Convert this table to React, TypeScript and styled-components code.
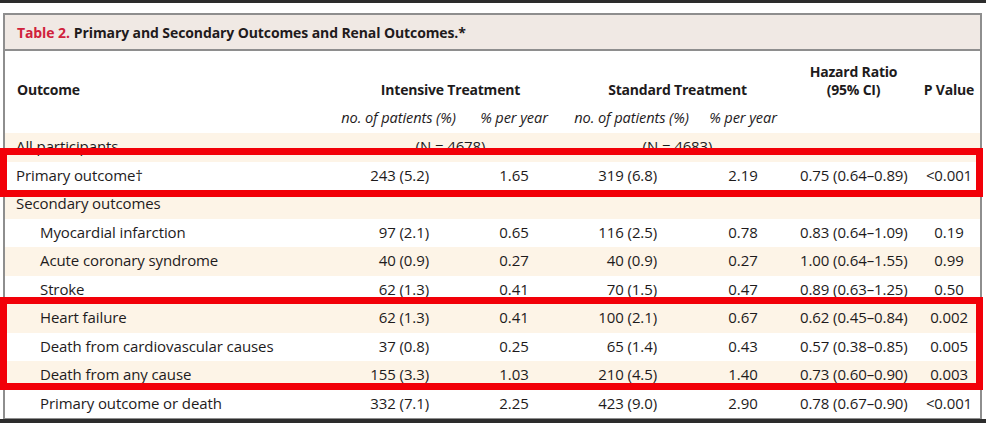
import React from "react";
import styled, { createGlobalStyle } from "styled-components";

const GlobalStyle = createGlobalStyle`
  html, body {
    margin: 0;
    padding: 0;
    background: #ffffff;
    overflow: hidden;
  }
  body {
    font-family: "Open Sans", Lato, "Liberation Sans", sans-serif;
    color: #1e1b1c;
  }
`;

const COLS = "330px 127px 104px 131px 92px 129px 62px";

const Page = styled.div`
  position: relative;
  width: 986px;
  height: 423px;
  overflow: hidden;
`;

const TopBar = styled.div`
  height: 3px;
  background: #2c2c2c;
`;

const BottomBar = styled.div`
  height: 4px;
  background: #2c2c2c;
`;

const Frame = styled.div`
  margin: 10px 0 0 3px;
  width: 975px;
  border: 2px solid #8e8e8e;
  border-bottom-width: 1px;
  background: #fff;
`;

const TitleBar = styled.div`
  height: 34px;
  display: flex;
  align-items: center;
  padding-left: 12px;
  background: #f0e9e4;
  border-bottom: 2px solid #8e8e8e;
  font-size: 14px;
  font-weight: 700;
  letter-spacing: -0.1px;
  color: #1f1b1c;
`;

const TableNo = styled.span`
  color: #d0223c;
  margin-right: 4px;
`;

const HeadRow = styled.div`
  display: grid;
  grid-template-columns: ${COLS};
  align-items: end;
  padding: 12px 0 4px;
  font-weight: 700;
  font-size: 14px;
  line-height: 17.5px;
  letter-spacing: -0.2px;
`;

const SubRow = styled.div`
  display: grid;
  grid-template-columns: ${COLS};
  align-items: center;
  height: 31px;
  padding-bottom: 2px;
  box-sizing: border-box;
  font-style: italic;
  font-size: 14.6px;
  letter-spacing: -0.1px;
`;

const HeadCell = styled.div<{ $span?: number; $left?: boolean }>`
  grid-column: span ${(p) => p.$span ?? 1};
  text-align: ${(p) => (p.$left ? "left" : "center")};
  padding-left: ${(p) => (p.$left ? "12px" : "0")};
  white-space: nowrap;
`;

const Row = styled.div<{ $shade?: boolean }>`
  display: grid;
  grid-template-columns: ${COLS};
  align-items: center;
  height: 28.5px;
  padding-bottom: 2px;
  box-sizing: border-box;
  background: ${(p) => (p.$shade ? "#fdf4e7" : "#ffffff")};
  font-size: 15px;
  letter-spacing: -0.1px;
  white-space: nowrap;
`;

const Label = styled.div<{ $indent?: boolean }>`
  padding-left: ${(p) => (p.$indent ? "35px" : "11px")};
`;

const Count = styled.div<{ $pad: number }>`
  text-align: right;
  padding-right: ${(p) => p.$pad}px;
`;

const Center = styled.div<{ $span?: number }>`
  grid-column: span ${(p) => p.$span ?? 1};
  text-align: center;
`;

const Ratio = styled.div`
  padding-left: 11px;
`;

const Highlight = styled.div<{ $top: number; $height: number }>`
  position: absolute;
  left: 0;
  top: ${(p) => p.$top}px;
  width: 983px;
  height: ${(p) => p.$height}px;
  box-sizing: border-box;
  border: 7px solid #f20008;
  pointer-events: none;
`;

type Outcome = {
  name: string;
  indent?: boolean;
  vals?: [string, string, string, string, string, string];
};

const rows: Outcome[] = [
  { name: "Primary outcome†", vals: ["243 (5.2)", "1.65", "319 (6.8)", "2.19", "0.75 (0.64–0.89)", "<0.001"] },
  { name: "Secondary outcomes" },
  { name: "Myocardial infarction", indent: true, vals: ["97 (2.1)", "0.65", "116 (2.5)", "0.78", "0.83 (0.64–1.09)", "0.19"] },
  { name: "Acute coronary syndrome", indent: true, vals: ["40 (0.9)", "0.27", "40 (0.9)", "0.27", "1.00 (0.64–1.55)", "0.99"] },
  { name: "Stroke", indent: true, vals: ["62 (1.3)", "0.41", "70 (1.5)", "0.47", "0.89 (0.63–1.25)", "0.50"] },
  { name: "Heart failure", indent: true, vals: ["62 (1.3)", "0.41", "100 (2.1)", "0.67", "0.62 (0.45–0.84)", "0.002"] },
  { name: "Death from cardiovascular causes", indent: true, vals: ["37 (0.8)", "0.25", "65 (1.4)", "0.43", "0.57 (0.38–0.85)", "0.005"] },
  { name: "Death from any cause", indent: true, vals: ["155 (3.3)", "1.03", "210 (4.5)", "1.40", "0.73 (0.60–0.90)", "0.003"] },
  { name: "Primary outcome or death", indent: true, vals: ["332 (7.1)", "2.25", "423 (9.0)", "2.90", "0.78 (0.67–0.90)", "<0.001"] },
];

export default function App() {
  return (
    <Page>
      <GlobalStyle />
      <TopBar />
      <Frame>
        <TitleBar>
          <TableNo>Table 2.</TableNo>
          Primary and Secondary Outcomes and Renal Outcomes.*
        </TitleBar>
        <HeadRow>
          <HeadCell $left>Outcome</HeadCell>
          <HeadCell $span={2}>Intensive Treatment</HeadCell>
          <HeadCell $span={2}>Standard Treatment</HeadCell>
          <HeadCell>
            Hazard Ratio
            <br />
            (95% CI)
          </HeadCell>
          <HeadCell>P Value</HeadCell>
        </HeadRow>
        <SubRow>
          <div />
          <Center>no. of patients (%)</Center>
          <Center>% per year</Center>
          <Center>no. of patients (%)</Center>
          <Center>% per year</Center>
        </SubRow>
        <Row $shade>
          <Label>All participants</Label>
          <Center $span={2}>(N = 4678)</Center>
          <Center $span={2}>(N = 4683)</Center>
        </Row>
        {rows.map((r, i) => (
          <Row key={r.name} $shade={i % 2 === 1}>
            <Label $indent={r.indent}>{r.name}</Label>
            {r.vals && (
              <>
                <Count $pad={33}>{r.vals[0]}</Count>
                <Center>{r.vals[1]}</Center>
                <Count $pad={40}>{r.vals[2]}</Count>
                <Center>{r.vals[3]}</Center>
                <Ratio>{r.vals[4]}</Ratio>
                <Center>{r.vals[5]}</Center>
              </>
            )}
          </Row>
        ))}
      </Frame>
      <BottomBar />
      <Highlight $top={148} $height={49} />
      <Highlight $top={297} $height={93} />
    </Page>
  );
}
